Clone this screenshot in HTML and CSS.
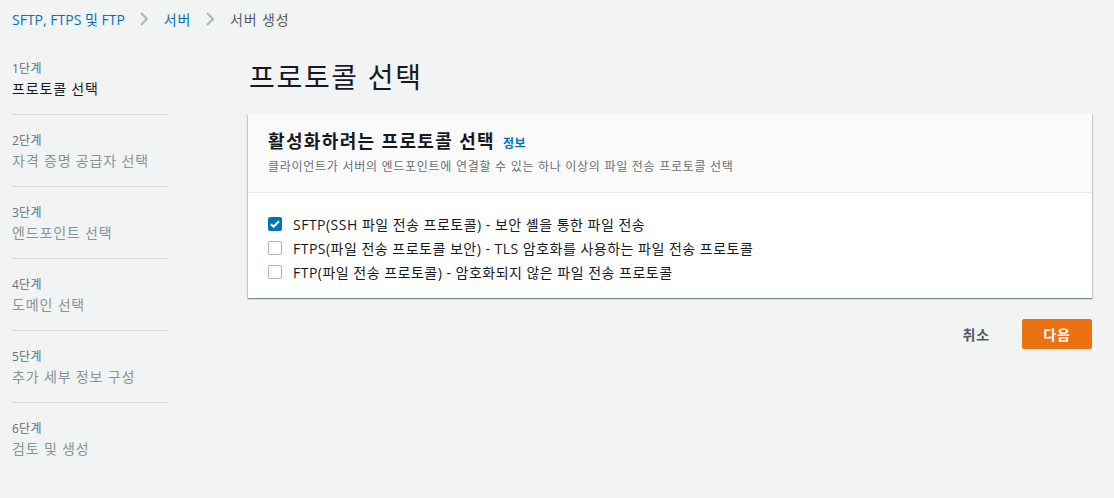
FILE: index.html
```html
<!DOCTYPE html>
<html lang="ko">
<head>
  <meta charset="UTF-8" />
  <title>서버 생성</title>
  <link rel="stylesheet" href="styles.css">
</head>
<body>
  <nav class="crumbs">
    <a href="#">SFTP, FTPS 및 FTP</a>
    <span class="sep"><svg width="10" height="14" viewBox="0 0 10 14"><path d="M2 1l6 6-6 6" fill="none" stroke="#aab7b8" stroke-width="2"/></svg></span>
    <a href="#" class="ko">서버</a>
    <span class="sep"><svg width="10" height="14" viewBox="0 0 10 14"><path d="M2 1l6 6-6 6" fill="none" stroke="#aab7b8" stroke-width="2"/></svg></span>
    <span class="current">서버 생성</span>
  </nav>

  <div class="layout">
    <ul class="steps">
      <li class="step active"><small>1단계</small><span>프로토콜 선택</span></li>
      <li class="step"><small>2단계</small><span>자격 증명 공급자 선택</span></li>
      <li class="step"><small>3단계</small><span>엔드포인트 선택</span></li>
      <li class="step"><small>4단계</small><span>도메인 선택</span></li>
      <li class="step"><small>5단계</small><span>추가 세부 정보 구성</span></li>
      <li class="step"><small>6단계</small><span>검토 및 생성</span></li>
    </ul>

    <main class="content">
      <h1>프로토콜 선택</h1>

      <section class="card">
        <div class="card-head">
          <h2>활성화하려는 프로토콜 선택 <a href="#" class="info">정보</a></h2>
          <p>클라이언트가 서버의 엔드포인트에 연결할 수 있는 하나 이상의 파일 전송 프로토콜 선택</p>
        </div>
        <div class="card-body">
          <label class="opt">
            <span class="box checked"><svg width="14" height="14" viewBox="0 0 14 14"><path d="M3 7.2l2.6 2.6L11 4.2" fill="none" stroke="#fff" stroke-width="2"/></svg></span>
            SFTP(SSH 파일 전송 프로토콜) - 보안 셸을 통한 파일 전송
          </label>
          <label class="opt">
            <span class="box"></span>
            FTPS(파일 전송 프로토콜 보안) - TLS 암호화를 사용하는 파일 전송 프로토콜
          </label>
          <label class="opt">
            <span class="box"></span>
            FTP(파일 전송 프로토콜) - 암호화되지 않은 파일 전송 프로토콜
          </label>
        </div>
      </section>

      <div class="actions">
        <button class="btn-link">취소</button>
        <button class="btn-primary">다음</button>
      </div>
    </main>
  </div>
</body>
</html>
```

FILE: styles.css
```css
body {
  margin: 0;
  padding: 0 22px 0 12px;
  font-family: 'Open Sans', 'Noto Sans CJK KR', sans-serif;
  font-size: 14px;
  background: #f2f3f3;
  color: #16191f;
}
a {
  color: #0073bb;
  text-decoration: none;
}
.crumbs {
  display: flex;
  align-items: center;
  height: 38px;
}
.crumbs .sep {
  display: flex;
  margin: 0 15px 0 14px;
}
.crumbs .ko {
  letter-spacing: 0.05em;
}
.crumbs .current {
  color: #545b64;
  letter-spacing: 0.06em;
}
.layout {
  display: flex;
  gap: 80px;
}
.steps {
  list-style: none;
  margin: 5px 0 0;
  padding: 0;
  width: 156px;
  flex-shrink: 0;
}
.step {
  display: flex;
  flex-direction: column;
  height: 40px;
  padding: 17px 0 14px;
  border-bottom: 1px solid #d5dbdb;
  color: #879596;
  letter-spacing: 0.06em;
}
.step:last-child {
  border-bottom: none;
}
.step small {
  font-size: 12px;
  line-height: 18px;
  color: #687078;
  letter-spacing: 0.02em;
}
.step span {
  font-size: 14px;
  line-height: 22px;
}
.step.active span {
  color: #16191f;
}
.content {
  flex: 1;
}
h1 {
  margin: 19px 0 0 1px;
  font-size: 28px;
  font-weight: 400;
  line-height: 40px;
  letter-spacing: 0.06em;
}
.card {
  margin-top: 17px;
  background: #fff;
  box-shadow: 0 1px 1px 0 rgba(0, 28, 36, 0.3), 1px 1px 1px 0 rgba(0, 28, 36, 0.15), -1px 1px 1px 0 rgba(0, 28, 36, 0.15);
}
.card-head {
  background: #fafafa;
  border-bottom: 1px solid #eaeded;
  padding: 14px 20px 16px;
}
.card-head h2 {
  margin: 0;
  font-size: 18px;
  font-weight: 700;
  line-height: 26px;
  letter-spacing: 0.075em;
}
.card-head .info {
  font-size: 12px;
  font-weight: 700;
  margin-left: 2px;
  letter-spacing: 0.04em;
}
.card-head p {
  margin: 1px 0 0;
  font-size: 12px;
  line-height: 18px;
  color: #687078;
  letter-spacing: 0.06em;
}
.card-body {
  padding: 19px 20px 14px;
  display: flex;
  flex-direction: column;
}
.opt {
  display: flex;
  align-items: center;
  height: 24px;
  gap: 11px;
  letter-spacing: 0.035em;
}
.box {
  width: 12px;
  height: 12px;
  border: 1px solid #aab7b8;
  border-radius: 2px;
  background: #fff;
  display: flex;
}
.box.checked {
  width: 14px;
  height: 14px;
  border: none;
  background: #0073bb;
}
.actions {
  display: flex;
  justify-content: flex-end;
  align-items: center;
  gap: 32px;
  margin-top: 21px;
}
button {
  font-family: inherit;
  font-size: 14px;
  font-weight: 700;
  letter-spacing: 0.06em;
  cursor: pointer;
}
.btn-link {
  background: none;
  border: none;
  color: #545b64;
  padding: 0;
}
.btn-primary {
  background: #ec7211;
  color: #fff;
  border: 1px solid #ec7211;
  border-radius: 2px;
  width: 70px;
  height: 30px;
}
```
